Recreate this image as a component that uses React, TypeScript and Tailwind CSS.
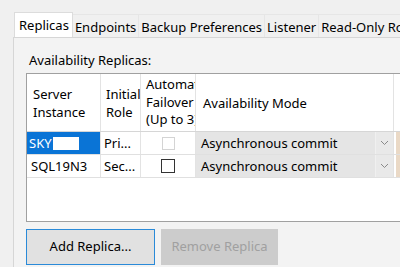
import React from "react";

const font = { fontFamily: '"Noto Sans", "Open Sans", sans-serif' };

function Tab({ label, selected, sep }: { label: string; selected?: boolean; sep?: boolean }) {
  if (selected) {
    return (
      <div className="h-[25px] bg-white border-l border-t border-r border-[#dcdcdc] pl-[4px] pr-[3px] pt-[1px] flex items-center text-[13px] text-black leading-none">
        {label}
      </div>
    );
  }
  return (
    <div
      className={`h-[23px] flex items-center px-[2px] pt-[2px] text-[13px] text-black leading-none whitespace-nowrap ${
        sep ? "border-r border-[#dcdcdc]" : ""
      } border-t border-[#e6e6e6]`}
    >
      {label}
    </div>
  );
}

function Chevron() {
  return (
    <svg width="9" height="6" viewBox="0 0 9 6" className="block">
      <path d="M1 1 L4.5 4.5 L8 1" fill="none" stroke="#8a8a8a" strokeWidth="1" />
    </svg>
  );
}

function Combo() {
  return (
    <div className="h-full flex bg-[#e5e5e5]">
      <div className="flex-1 flex items-center pl-[5px] text-[13px] text-black whitespace-nowrap overflow-hidden">
        Asynchronous commit
      </div>
      <div className="w-[18px] flex items-center justify-center border-l border-[#f0f0f0] bg-[#e9e9e9]">
        <Chevron />
      </div>
    </div>
  );
}

export default function App() {
  return (
    <div className="w-[400px] h-[267px] bg-[#f0f0f0] overflow-hidden flex flex-col" style={font}>
      <div className="flex items-end pl-[14px] pt-[12px]">
        <Tab label="Replicas" selected />
        <Tab label="Endpoints" sep />
        <Tab label="Backup Preferences" sep />
        <Tab label="Listener" sep />
        <Tab label="Read-Only Routing" />
      </div>
      <div className="flex-1 ml-[13px] border-l border-t border-[#d6d6d6] bg-[#f3f3f3] pl-[12px] flex flex-col">
        <div className="pt-[14px] pl-[3px] h-[35px] text-[13px] text-black leading-[16px] whitespace-nowrap">
          Availability Replicas:
        </div>
        <div className="w-[420px] h-[149px] bg-white border-l border-t border-b border-[#a0a0a0] flex flex-col">
          <div className="h-[58px] flex border-b border-[#d6d6d6] text-[13px] text-black leading-[17.5px]">
            <div className="w-[74px] border-r border-[#e3e3e3] flex flex-col justify-center pl-[6px] pt-[2px]">
              <div>Server</div>
              <div>Instance</div>
            </div>
            <div className="w-[40px] border-r border-[#e3e3e3] flex flex-col justify-center pl-[5px] pt-[2px] overflow-hidden whitespace-nowrap">
              <div>Initial</div>
              <div>Role</div>
            </div>
            <div className="w-[55px] border-r border-[#e3e3e3] flex flex-col justify-center pl-[5px] overflow-hidden whitespace-nowrap">
              <div>Automatic</div>
              <div>Failover</div>
              <div>(Up to 3)</div>
            </div>
            <div className="w-[198px] border-r border-[#e3e3e3] flex items-center pl-[7px] pt-[2px] whitespace-nowrap">
              Availability Mode
            </div>
            <div className="flex-1" />
          </div>
          <div className="h-[23px] flex border-b border-[#e0e0e0] text-[13px] leading-none">
            <div className="w-[74px] bg-[#0a74d6] border-r border-[#e3e3e3] flex items-center pl-[2px] text-white">
              <span>SKY</span>
              <span className="ml-[1px] w-[26px] h-[13px] bg-white" />
            </div>
            <div className="w-[40px] border-r border-[#e3e3e3] flex items-center pl-[3px] text-black">Pri...</div>
            <div className="w-[55px] border-r border-[#e3e3e3] flex items-center pl-[21px]">
              <div className="w-[13px] h-[13px] border border-[#d4d4d4] bg-white" />
            </div>
            <div className="w-[198px] border-r border-[#e3e3e3]">
              <Combo />
            </div>
            <div className="flex-1 pl-[2px]">
              <div className="h-full w-[6px] bg-[#ead9c6]" />
            </div>
          </div>
          <div className="h-[23px] flex border-b border-[#e0e0e0] text-[13px] leading-none">
            <div className="w-[74px] border-r border-[#e3e3e3] flex items-center pl-[4px] text-black">SQL19N3</div>
            <div className="w-[40px] border-r border-[#e3e3e3] flex items-center pl-[3px] text-black">Sec...</div>
            <div className="w-[55px] border-r border-[#e3e3e3] flex items-center pl-[20px]">
              <div className="w-[14px] h-[14px] border border-[#333333] bg-white" />
            </div>
            <div className="w-[198px] border-r border-[#e3e3e3]">
              <Combo />
            </div>
            <div className="flex-1 pl-[2px]">
              <div className="h-full w-[6px] bg-[#ead9c6]" />
            </div>
          </div>
        </div>
        <div className="mt-[7px] flex gap-[6px]">
          <div className="w-[129px] h-[36px] bg-[#e1e1e1] border border-[#2a8ad8] flex items-center justify-center text-[13px] text-black">
            Add Replica...
          </div>
          <div className="w-[117px] h-[36px] bg-[#cccccc] flex items-center justify-center text-[13px] text-[#a0a0a0]">
            Remove Replica
          </div>
        </div>
      </div>
    </div>
  );
}
